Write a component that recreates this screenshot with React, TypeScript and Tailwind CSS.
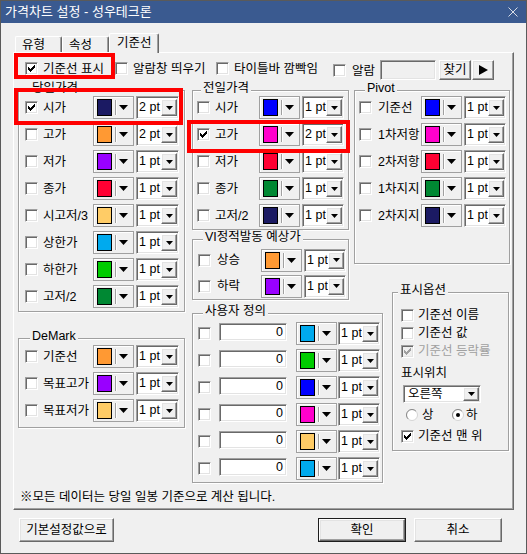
import React from "react";

const RAISED =
  "border border-t-white border-l-white border-r-[#696969] border-b-[#696969] shadow-[inset_-1px_-1px_0_#a0a0a0,inset_1px_1px_0_#e3e3e3] bg-[#f0f0f0]";
const SUNKEN =
  "border border-t-[#a0a0a0] border-l-[#a0a0a0] border-r-white border-b-white shadow-[inset_1px_1px_0_#696969,inset_-1px_-1px_0_#e3e3e3]";

const NAVY = "bg-[#1b1a63]";
const ORANGE = "bg-[#ff9933]";
const PURPLE = "bg-[#9900ff]";
const RED = "bg-[#ff0033]";
const LORANGE = "bg-[#ffcc66]";
const SKY = "bg-[#00aaee]";
const GREEN = "bg-[#00cc00]";
const DGREEN = "bg-[#008833]";
const BLUE = "bg-[#0000ff]";
const MAGENTA = "bg-[#ff00cc]";

function CheckMark({ gray }: { gray?: boolean }) {
  return (
    <svg
      width="7"
      height="7"
      viewBox="0 0 7 7"
      shapeRendering="crispEdges"
      fill={gray ? "#a0a0a0" : "#000"}
      className="absolute left-[2px] top-[2px]"
    >
      <rect x="6" y="0" width="1" height="1" />
      <rect x="5" y="1" width="2" height="1" />
      <rect x="0" y="2" width="1" height="1" />
      <rect x="4" y="2" width="3" height="1" />
      <rect x="0" y="3" width="2" height="1" />
      <rect x="3" y="3" width="3" height="1" />
      <rect x="0" y="4" width="5" height="1" />
      <rect x="1" y="5" width="3" height="1" />
      <rect x="2" y="6" width="1" height="1" />
    </svg>
  );
}

function Check({ on = false, disabled = false }: { on?: boolean; disabled?: boolean }) {
  return (
    <span
      className={`relative block w-[13px] h-[13px] shrink-0 ${SUNKEN} ${
        disabled ? "bg-[#f0f0f0]" : "bg-white"
      }`}
    >
      {on && <CheckMark gray={disabled} />}
    </span>
  );
}

function Radio({ on = false }: { on?: boolean }) {
  return (
    <svg width="12" height="12" viewBox="0 0 12 12" className="shrink-0">
      <circle cx="6" cy="6" r="5.5" fill="#fff" stroke="#d4d4d4" />
      <path d="M2.1 9.9 A5.5 5.5 0 0 1 9.9 2.1" fill="none" stroke="#8a8a8a" />
      {on && <circle cx="6" cy="6" r="2" fill="#000" />}
    </svg>
  );
}

function DownTri({ small = false }: { small?: boolean }) {
  return small ? (
    <svg width="7" height="4" viewBox="0 0 7 4" className="shrink-0">
      <path d="M0 0H7L3.5 4Z" fill="#000" />
    </svg>
  ) : (
    <svg width="9" height="5" viewBox="0 0 9 5" className="shrink-0">
      <path d="M0 0H9L4.5 5Z" fill="#000" />
    </svg>
  );
}

function ColorDrop({ c, cls = "" }: { c: string; cls?: string }) {
  return (
    <div
      className={`flex items-center h-[23px] w-[41px] shrink-0 border border-[#a0a0a0] shadow-[inset_1px_1px_0_#fff] bg-[#f0f0f0] pl-[3px] ${cls}`}
    >
      <span className={`block w-[15px] h-[17px] border border-black ${c}`} />
      <span className="block ml-[3px] h-[15px] w-[2px] border-l border-l-[#a0a0a0] border-r border-r-white" />
      <span className="ml-[2px] flex">
        <DownTri />
      </span>
    </div>
  );
}

function PtDrop({ v, w, cls = "" }: { v: string; w: string; cls?: string }) {
  return (
    <div className={`flex h-[23px] ${w} shrink-0 ${SUNKEN} bg-white py-[2px] pl-[2px] pr-[1px] ${cls}`}>
      <span className="flex-1 min-w-0 leading-[17px] whitespace-nowrap overflow-hidden">
        {v} pt
      </span>
      <span className={`flex items-center justify-center w-[16px] shrink-0 ${RAISED}`}>
        <DownTri small />
      </span>
    </div>
  );
}

type Variant = "L" | "M" | "VI" | "P";
const VAR: Record<Variant, { row: string; lab: string; pt: string }> = {
  L: { row: "h-[27px] pl-[6px]", lab: "ml-[5px] w-[50px]", pt: "w-[43px]" },
  M: { row: "h-[27px] pl-[4px]", lab: "ml-[5px] w-[44px]", pt: "w-[42px]" },
  VI: { row: "h-[26px] pl-[5px]", lab: "ml-[6px] w-[44px]", pt: "w-[42px]" },
  P: { row: "h-[27px] pl-[4px]", lab: "ml-[6px] w-[43px]", pt: "w-[42px]" },
};

function PRow({
  v,
  label,
  c,
  pt = "1",
  on = false,
}: {
  v: Variant;
  label: string;
  c: string;
  pt?: string;
  on?: boolean;
}) {
  const s = VAR[v];
  return (
    <div className={`flex items-center ${s.row}`}>
      <Check on={on} />
      <span className={`${s.lab} shrink-0 whitespace-nowrap`}>{label}</span>
      <ColorDrop c={c} />
      <PtDrop v={pt} w={s.pt} cls="ml-[2px]" />
    </div>
  );
}

function Group({
  title,
  tl,
  cls,
  children,
}: {
  title: string;
  tl: string;
  cls: string;
  children?: React.ReactNode;
}) {
  return (
    <div
      className={`relative shrink-0 border border-[#a0a0a0] shadow-[inset_1px_1px_0_#fff,1px_1px_0_#fff] ${cls}`}
    >
      <span
        className={`absolute top-[-10px] ${tl} px-[2px] bg-[#f0f0f0] leading-[14px] whitespace-nowrap`}
      >
        {title}
      </span>
      {children}
    </div>
  );
}

function UserRow({ c }: { c: string }) {
  return (
    <div className="flex items-center h-[27px] pl-[5px]">
      <Check />
      <div
        className={`self-start mt-[3px] ml-[8px] w-[68px] h-[18px] shrink-0 ${SUNKEN} bg-white text-right pr-[3px] leading-[16px]`}
      >
        0
      </div>
      <ColorDrop c={c} cls="ml-[9px]" />
      <PtDrop v="1" w="w-[42px]" cls="ml-[1px]" />
    </div>
  );
}

export default function App() {
  return (
    <div className="font-['Liberation_Sans','Noto_Sans_CJK_KR',sans-serif] text-[12.5px] leading-[14px] text-black relative w-[527px] h-[554px] bg-[#f0f0f0] border border-[#5a5a5a] overflow-hidden">
      {/* Title bar */}
      <div className="flex items-center h-[22px] bg-[#3a5a90] text-white text-[13px] pl-[4px]">
        <span className="whitespace-nowrap">가격차트 설정 - 성우테크론</span>
        <svg width="10" height="10" viewBox="0 0 10 10" className="ml-auto mr-[8px]">
          <path d="M0.5 0.5L9.5 9.5M9.5 0.5L0.5 9.5" stroke="#d8dde6" strokeWidth="1" />
        </svg>
      </div>

      <div className="pl-[12px] pt-[10px]">
        {/* Tabs */}
        <div className="flex items-end h-[19px] pl-[2px]">
          <div className="flex items-center w-[47px] h-[16px] pl-[6px] border-t border-l border-t-white border-l-white border-r border-r-[#696969] rounded-tl-[2px] rounded-tr-[2px] shadow-[inset_-1px_0_0_#a0a0a0]">
            유형
          </div>
          <div className="flex items-center w-[47px] h-[16px] pl-[6px] border-t border-l border-t-white border-l-white border-r border-r-[#696969] rounded-tl-[2px] rounded-tr-[2px] shadow-[inset_-1px_0_0_#a0a0a0]">
            속성
          </div>
          <div className="relative z-10 flex items-start w-[50px] h-[20px] mb-[-1px] pl-[7px] pt-[2px] bg-[#f0f0f0] border-t border-l border-t-white border-l-white border-r border-r-[#696969] rounded-tl-[2px] rounded-tr-[2px] shadow-[inset_-1px_0_0_#a0a0a0]">
            기준선
          </div>
        </div>

        {/* Panel */}
        <div className="relative flex flex-col w-[501px] h-[458px] pt-[7px] border border-t-white border-l-white border-r-[#696969] border-b-[#696969] shadow-[inset_-1px_-1px_0_#a0a0a0]">
          {/* top options row */}
          <div className="flex items-start h-[20px] pl-[11px]">
            <div className="flex items-center mt-[2px] h-[13px]">
              <Check on />
              <span className="ml-[5px] w-[72px] whitespace-nowrap">기준선 표시</span>
            </div>
            <div className="flex items-center mt-[2px] h-[13px]">
              <Check />
              <span className="ml-[5px] w-[83px] whitespace-nowrap">알람창 띄우기</span>
            </div>
            <div className="flex items-center mt-[2px] h-[13px]">
              <Check />
              <span className="ml-[5px] w-[99px] whitespace-nowrap">타이틀바 깜빡임</span>
            </div>
            <div className="flex items-center mt-[4px] h-[13px]">
              <Check />
              <span className="ml-[6px] w-[28px] whitespace-nowrap">알람</span>
            </div>
            <div className={`w-[56px] h-[20px] ${SUNKEN} bg-[#f0f0f0]`} />
            <div
              className={`flex items-center justify-center ml-[3px] w-[32px] h-[20px] ${RAISED}`}
            >
              찾기
            </div>
            <div
              className={`flex items-center justify-center ml-[1px] w-[22px] h-[20px] ${RAISED}`}
            >
              <svg width="9" height="10" viewBox="0 0 9 10">
                <path d="M0 0L9 5L0 10Z" fill="#000" />
              </svg>
            </div>
          </div>

          {/* columns */}
          <div className="flex items-start mt-[10px] pl-[4px]">
            {/* left */}
            <div className="flex flex-col w-[167px] shrink-0">
              <Group title="당일가격" tl="left-[11px]" cls="w-[167px] pt-[3px] pb-[1px]">
                <PRow v="L" label="시가" c={NAVY} pt="2" on />
                <PRow v="L" label="고가" c={ORANGE} pt="2" />
                <PRow v="L" label="저가" c={PURPLE} />
                <PRow v="L" label="종가" c={RED} />
                <PRow v="L" label="시고저/3" c={LORANGE} />
                <PRow v="L" label="상한가" c={SKY} />
                <PRow v="L" label="하한가" c={GREEN} />
                <PRow v="L" label="고저/2" c={DGREEN} />
              </Group>
              <Group title="DeMark" tl="left-[11px]" cls="mt-[26px] w-[167px] pt-[4px] pb-[3px]">
                <PRow v="L" label="기준선" c={ORANGE} />
                <PRow v="L" label="목표고가" c={PURPLE} />
                <PRow v="L" label="목표저가" c={LORANGE} />
              </Group>
            </div>

            {/* middle */}
            <div className="flex flex-col w-[157px] ml-[7px] shrink-0">
              <Group title="전일가격" tl="left-[8px]" cls="w-[157px] pt-[3px]">
                <PRow v="M" label="시가" c={BLUE} />
                <PRow v="M" label="고가" c={MAGENTA} pt="2" on />
                <PRow v="M" label="저가" c={RED} />
                <PRow v="M" label="종가" c={DGREEN} />
                <PRow v="M" label="고저/2" c={NAVY} />
              </Group>
              <Group title="VI정적발동 예상가" tl="left-[10px]" cls="mt-[9px] w-[157px] pt-[7px]">
                <PRow v="VI" label="상승" c={ORANGE} />
                <PRow v="VI" label="하락" c={PURPLE} />
              </Group>
              <Group title="사용자 정의" tl="left-[10px]" cls="mt-[13px] w-[191px] pt-[6px]">
                <UserRow c={SKY} />
                <UserRow c={GREEN} />
                <UserRow c={BLUE} />
                <UserRow c={MAGENTA} />
                <UserRow c={LORANGE} />
                <UserRow c={SKY} />
              </Group>
            </div>

            {/* right */}
            <div className="flex flex-col w-[156px] ml-[5px] shrink-0">
              <Group title="Pivot" tl="left-[10px]" cls="w-[156px] h-[174px] pt-[3px]">
                <PRow v="P" label="기준선" c={BLUE} />
                <PRow v="P" label="1차저항" c={MAGENTA} />
                <PRow v="P" label="2차저항" c={RED} />
                <PRow v="P" label="1차지지" c={DGREEN} />
                <PRow v="P" label="2차지지" c={NAVY} />
              </Group>
              <Group
                title="표시옵션"
                tl="left-[5px]"
                cls="mt-[28px] ml-[38px] w-[117px] pt-[13px] pb-[5px] pl-[8px]"
              >
                <div className="flex items-center h-[18px]">
                  <Check />
                  <span className="ml-[4px] whitespace-nowrap">기준선 이름</span>
                </div>
                <div className="flex items-center h-[18px]">
                  <Check />
                  <span className="ml-[4px] whitespace-nowrap">기준선 값</span>
                </div>
                <div className="flex items-center h-[18px]">
                  <Check on disabled />
                  <span className="ml-[4px] whitespace-nowrap text-[#a0a0a0]">기준선 등락률</span>
                </div>
                <div className="mt-[6px] leading-[15px]">표시위치</div>
                <div
                  className={`flex mt-[4px] ml-[2px] w-[78px] h-[18px] ${SUNKEN} bg-white p-[1px] pl-[2px]`}
                >
                  <span className="flex-1 pl-[2px] leading-[14px] whitespace-nowrap">오른쪽</span>
                  <span className={`flex items-center justify-center w-[16px] shrink-0 ${RAISED}`}>
                    <DownTri small />
                  </span>
                </div>
                <div className="flex items-center mt-[4px] h-[16px]">
                  <span className="ml-[5px] flex">
                    <Radio />
                  </span>
                  <span className="ml-[4px] w-[30px]">상</span>
                  <Radio on />
                  <span className="ml-[2px]">하</span>
                </div>
                <div className="flex items-center mt-[4px] h-[18px]">
                  <Check on />
                  <span className="ml-[4px] whitespace-nowrap">기준선 맨 위</span>
                </div>
              </Group>
            </div>
          </div>

          <div className="mt-auto mb-[5px] pl-[6px] leading-[14px] whitespace-nowrap">
            ※모든 데이터는 당일 일봉 기준으로 계산 됩니다.
          </div>
        </div>

        {/* bottom buttons */}
        <div className="flex mt-[8px] pl-[6px]">
          <div className={`flex items-center justify-center w-[95px] h-[24px] ${RAISED}`}>
            기본설정값으로
          </div>
          <div className="ml-[204px] w-[88px] h-[24px] border border-[#1e1e1e]">
            <div className={`flex items-center justify-center w-full h-full ${RAISED}`}>확인</div>
          </div>
          <div className={`flex items-center justify-center ml-[8px] w-[88px] h-[24px] ${RAISED}`}>
            취소
          </div>
        </div>
      </div>

      {/* red annotation boxes */}
      <div className="absolute left-[13px] top-[52px] w-[101px] h-[26px] border-4 border-[#ff0000]" />
      <div className="absolute left-[13px] top-[87px] w-[169px] h-[37px] border-4 border-[#ff0000]" />
      <div className="absolute left-[186px] top-[119px] w-[163px] h-[33px] border-4 border-[#ff0000]" />
    </div>
  );
}
